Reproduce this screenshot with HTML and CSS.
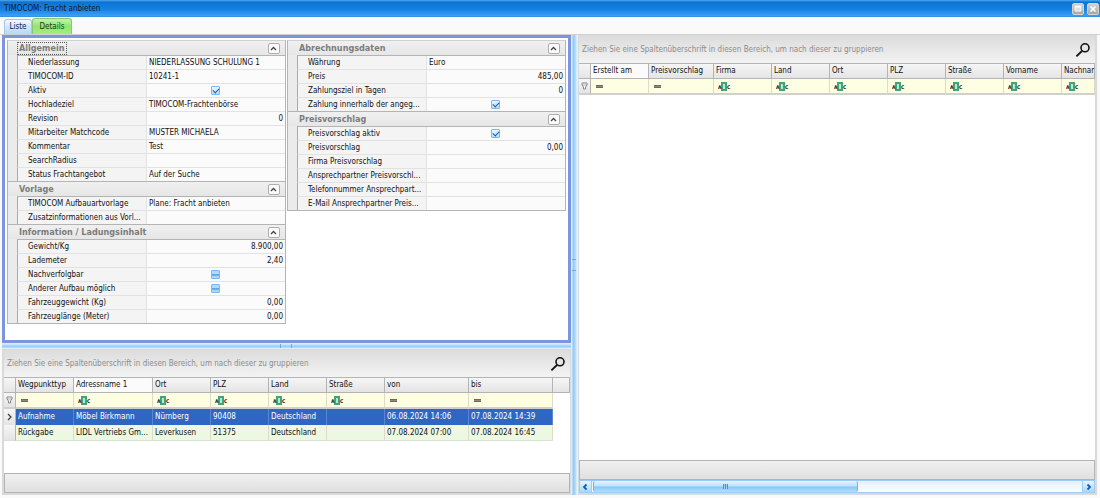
FILE: index.html
```html
<!DOCTYPE html>
<html lang="de">
<head>
<meta charset="utf-8">
<title>TIMOCOM: Fracht anbieten</title>
<link rel="stylesheet" href="styles.css">
</head>
<body>
<svg class="defs" aria-hidden="true">
  <symbol id="abc" viewBox="0 0 14 9">
    <rect x="3" y="0" width="6" height="9" fill="#3fa57c"/>
    <rect x="5" y="2" width="2" height="5" fill="#b9e6cf"/>
    <text x="0" y="7" class="abc-letter">A</text>
    <text x="9" y="7" class="abc-letter">C</text>
  </symbol>
  <symbol id="eq" viewBox="0 0 14 9">
    <path d="M1 3.5h7M1 5.5h7" stroke="#6a6a5e" stroke-width="1"/>
    <path d="M1 4.5h7" stroke="#8c8c7c" stroke-width="1"/>
  </symbol>
  <symbol id="funnel" viewBox="0 0 7 8">
    <path d="M1 1h5v2L4.5 5v2h-2V5L1 3z" fill="#fff" stroke="#888" stroke-width="1"/>
    <path d="M1 3h5" stroke="#888" stroke-width=".7"/>
  </symbol>
  <symbol id="search" viewBox="0 0 16 16">
    <circle cx="10" cy="5.8" r="4" fill="none" stroke="#111" stroke-width="1.6"/>
    <path d="M7 9L1.4 14.4" stroke="#111" stroke-width="1.8"/>
  </symbol>
  <symbol id="up" viewBox="0 0 7 5">
    <path d="M1 4l2.5-2.5L6 4" fill="none" stroke="#444" stroke-width="1.3"/>
  </symbol>
</svg>

<div class="window">
  <header class="titlebar">
    <h1 class="title">TIMOCOM: Fracht anbieten</h1>
    <button class="winbtn" aria-label="Maximieren"><svg viewBox="0 0 12 12"><path d="M2.5 3.5h7v5h-7z" fill="#ddd" stroke="#fff"/><path d="M2 3h8" stroke="#fff" stroke-width="2"/></svg></button>
    <button class="winbtn" aria-label="Schließen"><svg viewBox="0 0 12 12"><path d="M3 3l6 6M9 3L3 9" stroke="#fff" stroke-width="2"/></svg></button>
  </header>
  <nav class="tabs">
    <button class="tab">Liste</button>
    <button class="tab tab-active">Details</button>
  </nav>

  <main class="content">
    <div class="left">
      <section class="props">
        <div class="propgrid">
          <div class="group">
            <div class="ghead"><h2 class="gtitle focused">Allgemein</h2><button class="fold" aria-label="Einklappen"><svg><use href="#up"/></svg></button></div>
            <div class="row"><span class="name">Niederlassung</span><span class="val">NIEDERLASSUNG SCHULUNG 1</span></div>
            <div class="row"><span class="name">TIMOCOM-ID</span><span class="val">10241-1</span></div>
            <div class="row"><label class="name" for="aktiv">Aktiv</label><span class="val mid"><input class="check" type="checkbox" id="aktiv" checked></span></div>
            <div class="row"><span class="name">Hochladeziel</span><span class="val">TIMOCOM-Frachtenbörse</span></div>
            <div class="row"><span class="name">Revision</span><span class="val num">0</span></div>
            <div class="row"><span class="name">Mitarbeiter Matchcode</span><span class="val">MUSTER MICHAELA</span></div>
            <div class="row"><span class="name">Kommentar</span><span class="val">Test</span></div>
            <div class="row"><span class="name">SearchRadius</span><span class="val"></span></div>
            <div class="row"><span class="name">Status Frachtangebot</span><span class="val">Auf der Suche</span></div>
          </div>
          <div class="group">
            <div class="ghead"><h2 class="gtitle">Vorlage</h2><button class="fold" aria-label="Einklappen"><svg><use href="#up"/></svg></button></div>
            <div class="row"><span class="name">TIMOCOM Aufbauartvorlage</span><span class="val">Plane: Fracht anbieten</span></div>
            <div class="row"><span class="name">Zusatzinformationen aus Vorl...</span><span class="val"></span></div>
          </div>
          <div class="group">
            <div class="ghead"><h2 class="gtitle">Information / Ladungsinhalt</h2><button class="fold" aria-label="Einklappen"><svg><use href="#up"/></svg></button></div>
            <div class="row"><span class="name">Gewicht/Kg</span><span class="val num">8.900,00</span></div>
            <div class="row"><span class="name">Lademeter</span><span class="val num">2,40</span></div>
            <div class="row"><label class="name" for="nachv">Nachverfolgbar</label><span class="val mid"><input class="check mixed" type="checkbox" id="nachv"></span></div>
            <div class="row"><label class="name" for="aufbau">Anderer Aufbau möglich</label><span class="val mid"><input class="check mixed" type="checkbox" id="aufbau"></span></div>
            <div class="row"><span class="name">Fahrzeuggewicht (Kg)</span><span class="val num">0,00</span></div>
            <div class="row"><span class="name">Fahrzeuglänge (Meter)</span><span class="val num">0,00</span></div>
          </div>
        </div>
        <div class="propgrid">
          <div class="group">
            <div class="ghead"><h2 class="gtitle">Abrechnungsdaten</h2><button class="fold" aria-label="Einklappen"><svg><use href="#up"/></svg></button></div>
            <div class="row"><span class="name">Währung</span><span class="val">Euro</span></div>
            <div class="row"><span class="name">Preis</span><span class="val num">485,00</span></div>
            <div class="row"><span class="name">Zahlungsziel in Tagen</span><span class="val num">0</span></div>
            <div class="row"><label class="name" for="zahlung">Zahlung innerhalb der angeg...</label><span class="val mid"><input class="check" type="checkbox" id="zahlung" checked></span></div>
          </div>
          <div class="group">
            <div class="ghead"><h2 class="gtitle">Preisvorschlag</h2><button class="fold" aria-label="Einklappen"><svg><use href="#up"/></svg></button></div>
            <div class="row"><label class="name" for="vorschlag">Preisvorschlag aktiv</label><span class="val mid"><input class="check" type="checkbox" id="vorschlag" checked></span></div>
            <div class="row"><span class="name">Preisvorschlag</span><span class="val num">0,00</span></div>
            <div class="row"><span class="name">Firma Preisvorschlag</span><span class="val"></span></div>
            <div class="row"><span class="name">Ansprechpartner Preisvorschl...</span><span class="val"></span></div>
            <div class="row"><span class="name">Telefonnummer Ansprechpart...</span><span class="val"></span></div>
            <div class="row"><span class="name">E-Mail Ansprechpartner Preis...</span><span class="val"></span></div>
          </div>
        </div>
      </section>

      <div class="hsplit"><span class="grip"></span></div>

      <section class="gridpanel waypoints">
        <div class="grouppanel"><span class="hint">Ziehen Sie eine Spaltenüberschrift in diesen Bereich, um nach dieser zu gruppieren</span><button class="find" aria-label="Suchen"><svg><use href="#search"/></svg></button></div>
        <div class="gridbody">
          <table class="grid">
            <colgroup><col class="c-ind"><col class="c-std"><col class="c-name"><col class="c-std"><col class="c-std"><col class="c-std"><col class="c-std"><col class="c-date"><col class="c-date"><col></colgroup>
            <thead>
              <tr class="heads"><th></th><th>Wegpunkttyp</th><th class="hot">Adressname 1</th><th>Ort</th><th>PLZ</th><th>Land</th><th>Straße</th><th>von</th><th>bis</th><th></th></tr>
              <tr class="filters"><td class="ind"><svg class="fun"><use href="#funnel"/></svg></td><td><svg class="op"><use href="#eq"/></svg></td><td><svg class="op"><use href="#abc"/></svg></td><td><svg class="op"><use href="#abc"/></svg></td><td><svg class="op"><use href="#abc"/></svg></td><td><svg class="op"><use href="#abc"/></svg></td><td><svg class="op"><use href="#abc"/></svg></td><td><svg class="op"><use href="#eq"/></svg></td><td><svg class="op"><use href="#eq"/></svg></td><td class="rest"></td></tr>
            </thead>
            <tbody>
              <tr class="selected"><td class="ind"><svg class="fun" viewBox="0 0 7 8"><path d="M2 1l3 3-3 3" fill="none" stroke="#444" stroke-width="1.3"/></svg></td><td>Aufnahme</td><td>Möbel Birkmann</td><td>Nürnberg</td><td>90408</td><td>Deutschland</td><td></td><td>06.08.2024 14:06</td><td>07.08.2024 14:39</td><td class="rest"></td></tr>
              <tr class="even"><td class="ind"></td><td>Rückgabe</td><td>LIDL Vertriebs Gm...</td><td>Leverkusen</td><td>51375</td><td>Deutschland</td><td></td><td>07.08.2024 07:00</td><td>07.08.2024 16:45</td><td class="rest"></td></tr>
            </tbody>
          </table>
        </div>
        <div class="gridfoot"></div>
      </section>
    </div>

    <div class="vsplit"><span class="grip"></span></div>

    <section class="gridpanel offers">
      <div class="grouppanel"><span class="hint">Ziehen Sie eine Spaltenüberschrift in diesen Bereich, um nach dieser zu gruppieren</span><button class="find" aria-label="Suchen"><svg><use href="#search"/></svg></button></div>
      <div class="gridbody">
        <table class="grid">
          <colgroup><col class="c-ind"><col class="c-std"><col class="c-price"><col class="c-std"><col class="c-std"><col class="c-std"><col class="c-std"><col class="c-std"><col class="c-std"><col></colgroup>
          <thead>
            <tr class="heads"><th></th><th class="hot">Erstellt am</th><th>Preisvorschlag</th><th>Firma</th><th>Land</th><th>Ort</th><th>PLZ</th><th>Straße</th><th>Vorname</th><th>Nachname</th></tr>
            <tr class="filters"><td class="ind"><svg class="fun"><use href="#funnel"/></svg></td><td><svg class="op"><use href="#eq"/></svg></td><td><svg class="op"><use href="#eq"/></svg></td><td><svg class="op"><use href="#abc"/></svg></td><td><svg class="op"><use href="#abc"/></svg></td><td><svg class="op"><use href="#abc"/></svg></td><td><svg class="op"><use href="#abc"/></svg></td><td><svg class="op"><use href="#abc"/></svg></td><td><svg class="op"><use href="#abc"/></svg></td><td><svg class="op"><use href="#abc"/></svg></td></tr>
          </thead>
        </table>
      </div>
      <div class="gridfoot"></div>
      <div class="scroll">
        <button class="arrow" aria-label="Nach links"><svg viewBox="0 0 8 8"><path d="M5.5 1.5L3 4l2.5 2.5" fill="none" stroke="#0f5fb8" stroke-width="1.8"/></svg></button>
        <div class="track"><div class="thumb"><span class="bars"></span></div></div>
        <button class="arrow" aria-label="Nach rechts"><svg viewBox="0 0 8 8"><path d="M2.5 1.5L5 4 2.5 6.5" fill="none" stroke="#0f5fb8" stroke-width="1.8"/></svg></button>
      </div>
    </section>
  </main>
</div>
</body>
</html>
```
FILE: styles.css
```css
* { box-sizing: border-box; }
body {
  margin: 0;
  background: #fafafa;
  color: #111;
  font: 8px/14px "DejaVu Sans Condensed", "DejaVu Sans", sans-serif;
}
button { font: inherit; color: inherit; padding: 0; margin: 0; }
.defs { display: none; }
.abc-letter { font: bold 5px "DejaVu Sans Condensed", sans-serif; fill: #111; }

.window { display: flex; flex-direction: column; min-height: 100vh; padding-bottom: 5px; }

.titlebar {
  display: flex;
  align-items: center;
  gap: 3px;
  height: 17px;
  padding: 0 1px 0 4px;
  background: linear-gradient(#58a8ee 0, #0a74d6 2px, #1580e2 9px, #3c9ff4 16px, #3088dc 17px);
}
.title { flex: 1; margin: 0; font-size: 8px; font-weight: normal; color: #071a30; }
.winbtn {
  display: flex;
  width: 12px;
  height: 12px;
  border: 1px solid #d8d4cc;
  border-radius: 2px;
  background: linear-gradient(#d2d2d2, #a8a8a8);
}
.winbtn svg { width: 10px; height: 10px; }

.tabs { display: flex; align-items: flex-end; height: 17px; padding-left: 4px; }
.tab {
  width: 28px;
  height: 15px;
  border: 1px solid #a9c6e6;
  border-bottom: 0;
  border-radius: 3px 3px 0 0;
  background: linear-gradient(#f4faff, #cfe6fb 50%, #b2dafa);
  color: #0a1a50;
}
.tab-active {
  width: 40px;
  height: 16px;
  border-color: #8fc37c;
  background: linear-gradient(#c5f2ac, #8fe56d 50%, #a4f07c);
  color: #123c12;
}

.content {
  display: flex;
  flex: 1;
  padding: 0 3px 0 2px;
  border-top: 1px solid #d0d0d0;
}
.left { display: flex; flex-direction: column; flex: 570 1 0; min-width: 0; }

.props {
  display: flex;
  flex: 1 0 auto;
  align-items: flex-start;
  gap: 1px;
  padding: 2px 2px 16px;
  border: 3px solid #7c95df;
  background: #fff;
}
.propgrid { flex: 1; min-width: 0; border: 1px solid #b4b4b4; border-top-color: #d0d0d0; background: #ebebeb; }
.group + .group { border-top: 1px solid #b4b4b4; }
.ghead {
  display: flex;
  align-items: center;
  height: 14px;
  padding: 0 5px 0 10px;
  background: linear-gradient(#f0f0f0, #e6e6e6);
}
.gtitle { margin: 0; padding: 0 1px; font-size: 9px; line-height: 11px; color: #7c7c7c; }
.focused { outline: 1px dotted #555; }
.fold {
  display: flex;
  align-items: center;
  justify-content: center;
  width: 12px;
  height: 11px;
  margin-left: auto;
  border: 1px solid #adadad;
  border-radius: 2px;
  background: #fbfbfb;
}
.fold svg { width: 7px; height: 5px; }
.row {
  display: flex;
  height: 14px;
  margin-left: 9px;
  border-left: 1px solid #aaa;
  border-top: 1px solid #e2e2e2;
  background: #f4f4f4;
}
.ghead + .row { border-top-color: #b4b4b4; }
.name { width: 129px; padding-left: 10px; border-right: 1px solid #e2e2e2; overflow: hidden; white-space: nowrap; }
.val { flex: 1; min-width: 0; padding: 0 2px; background: #fbfbfb; line-height: 13px; overflow: hidden; white-space: nowrap; }
.num { text-align: right; }
.mid { display: flex; align-items: center; justify-content: center; }

.check {
  appearance: none;
  width: 9px;
  height: 9px;
  margin: 0;
  border: 1px solid #7db8ee;
  border-radius: 1px;
  background: linear-gradient(#eaf5ff, #b5dcfc);
}
.check:checked::after {
  content: "";
  display: block;
  width: 5px;
  height: 3px;
  margin: 1px;
  border: solid #1460b4;
  border-width: 0 0 1px 1px;
  transform: rotate(-45deg);
}
.mixed { background: linear-gradient(#b4dafb 3px, #5ba5ea 3px, #6fb4f2 5px, #a8d6fc 5px); }

.hsplit, .vsplit { display: flex; align-items: center; justify-content: center; }
.hsplit { height: 6px; background: linear-gradient(#e4e9ef 1px, #b5dcfc 2px, #8cc8fa 4px, #dceefc 5px); }
.vsplit { width: 7px; background: linear-gradient(90deg, #dcebf8 1px, #8cc8fa 2px, #a9d6fb 4px, #e2f1fd 6px); }
.hsplit .grip { width: 12px; height: 4px; border: solid #6ca9df; border-width: 0 1px; }
.vsplit .grip { width: 4px; height: 12px; border: solid #6ca9df; border-width: 1px 0; }

.gridpanel { display: flex; flex-direction: column; background: #fff; border: 2px solid #dadada; border-top-width: 1px; }
.waypoints { height: 146px; border-right-width: 1px; }
.offers { flex: 517 1 0; min-width: 0; border-left-width: 1px; }
.grouppanel {
  display: flex;
  align-items: center;
  justify-content: space-between;
  height: 27px;
  padding: 0 4px 0 3px;
  background: linear-gradient(#dcdcdc, #f3f3f3);
}
.hint { color: #8c8c8c; white-space: nowrap; }
.find { display: flex; border: 0; background: none; }
.find svg { width: 16px; height: 16px; }

.gridbody { flex: 1; overflow: hidden; }
.grid { width: 100%; table-layout: fixed; border-collapse: separate; border-spacing: 0; }
.c-ind { width: 12px; }
.c-std { width: 58px; }
.c-name { width: 79px; }
.c-price { width: 65px; }
.c-date { width: 84px; }
.grid th, .grid td { height: 16px; padding: 0 2px; text-align: left; font-weight: normal; white-space: nowrap; overflow: hidden; vertical-align: middle; }
.grid th {
  border: solid #b4b4b4;
  border-width: 1px 1px 1px 0;
  background: linear-gradient(#f6f6f6, #e4e4e4);
}
.grid .hot { background: #fbfbfb; }
.grid td { border-right: 1px solid #dcdcc8; }
.filters td { background: #feffe2; border-bottom: 2px solid #cfcfcb; }
.filters .ind, .grid .ind { padding: 0 2px; background: linear-gradient(#f6f6f6, #e4e4e4); border-right-color: #b4b4b4; }
.op, .fun { display: block; }
.op { width: 14px; height: 9px; margin-left: 2px; }
.fun { width: 7px; height: 8px; }
.selected td { background: #2f66c4; color: #fff; border-right-color: #5b86d0; }
.even td { background: #edf8e2; border-bottom: 1px solid #d9e2d0; }
.grid .rest { background: #fff; border: 0; }

.gridfoot { height: 20px; border: 1px solid #b4b4b4; background: linear-gradient(#f0f0f0, #e0e0e0); }

.scroll { display: flex; height: 13px; border: 1px solid #9ccbf5; background: #f0f8ff; }
.arrow {
  display: flex;
  align-items: center;
  justify-content: center;
  width: 11px;
  border: 0;
  background: linear-gradient(#e8f5ff, #a9d8fc);
}
.arrow svg { width: 8px; height: 8px; }
.track { flex: 1; border: solid #9ccbf5; border-width: 0 1px; background: linear-gradient(#e4f0fb, #fbfdff); }
.thumb {
  display: flex;
  align-items: center;
  justify-content: center;
  width: 54%;
  height: 11px;
  margin-left: 1px;
  border: solid #6cb4f0;
  border-width: 0 1px;
  border-radius: 2px;
  background: linear-gradient(#e4f3ff, #bfe2fd 45%, #86c8fb 55%, #b4e0ff);
}
.bars { width: 5px; height: 5px; background: repeating-linear-gradient(90deg, #4c8ed4 0 1px, #a4d0f6 1px 2px); }
```
